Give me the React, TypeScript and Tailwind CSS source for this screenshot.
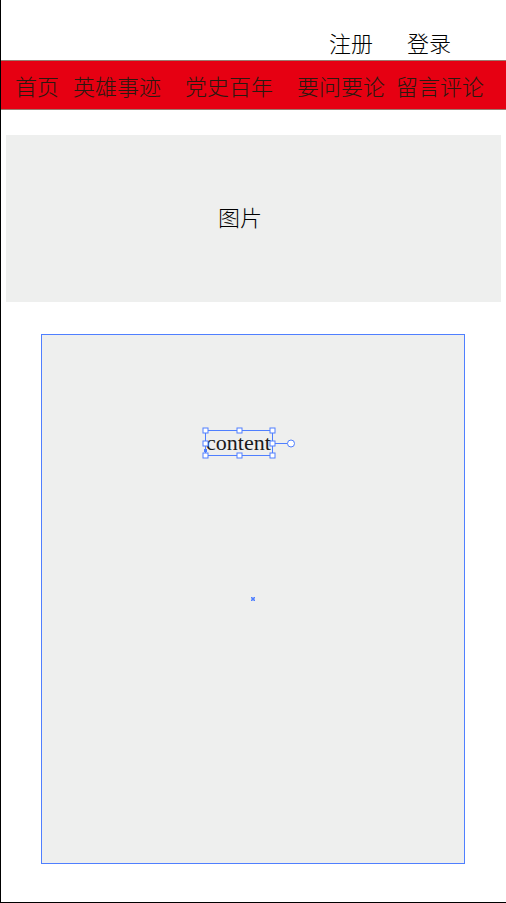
import React from "react";

const NAV = [
  { label: "首页", ml: "ml-[14px]" },
  { label: "英雄事迹", ml: "ml-[14px]" },
  { label: "党史百年", ml: "ml-[24px]" },
  { label: "要问要论", ml: "ml-[24px]" },
  { label: "留言评论", ml: "ml-[11px]" },
];

const cjk = "font-['Noto_Sans_CJK_SC','Noto_Sans',sans-serif]";

function Handle({ x, y }: { x: number; y: number }) {
  return <rect x={x - 2.5} y={y - 2.5} width={5} height={5} fill="#fff" stroke="#4f7fff" strokeWidth={1} />;
}

function SelectionOverlay() {
  // editor-style selection frame drawn over the "content" label
  return (
    <div className="absolute left-[160px] top-[92px] h-[32px] w-[96px]">
      <span className="absolute left-[4px] top-[1px] font-['Liberation_Serif',serif] text-[22px] leading-[30px] text-[#1a1a1a]">content</span>
      <svg width="96" height="32" viewBox="0 0 96 32" className="absolute left-0 top-0">
        <rect x={3.5} y={3.5} width={67} height={25} fill="none" stroke="#4f7fff" strokeWidth={1} />
        <line x1={71} y1={16.5} x2={85.5} y2={16.5} stroke="#4f7fff" strokeWidth={1} />
        <circle cx={89} cy={16.5} r={3.5} fill="#fff" stroke="#4f7fff" strokeWidth={1} />
        <rect x={2} y={22} width={3} height={3} fill="#4f7fff" />
        <Handle x={3.5} y={3.5} />
        <Handle x={37.5} y={3.5} />
        <Handle x={70.5} y={3.5} />
        <Handle x={3.5} y={16.5} />
        <Handle x={70.5} y={16.5} />
        <Handle x={3.5} y={28.5} />
        <Handle x={37.5} y={28.5} />
        <Handle x={70.5} y={28.5} />
      </svg>
    </div>
  );
}

export default function App() {
  return (
    <div className="h-[903px] w-[507px] overflow-hidden border-b border-l border-black bg-white">
      <div className="flex h-[60px] items-end justify-end pb-[5px] pr-[56px]">
        <span className={`${cjk} text-[22px] leading-[26px] font-light text-black`}>注册</span>
        <span className={`${cjk} ml-[34px] text-[22px] leading-[26px] font-light text-black`}>登录</span>
      </div>

      <nav className="flex h-[50px] items-center border-y border-[#9a7b6f] bg-[#e60012]">
        {NAV.map((item) => (
          <span key={item.label} className={`${cjk} ${item.ml} text-[22px] leading-[26px] font-light text-[#2a1a10]`}>
            {item.label}
          </span>
        ))}
      </nav>

      <div className="ml-[5px] mt-[25px] flex h-[167px] w-[495px] items-center bg-[#eeefee] pb-[6px] pl-[212px]">
        <span className={`${cjk} text-[22px] leading-[26px] font-light text-black`}>图片</span>
      </div>

      <div className="relative ml-[40px] mt-[32px] h-[530px] w-[424px] border border-[#4f7fff] bg-[#eeefee]">
        <SelectionOverlay />
        <svg width="6" height="6" viewBox="0 0 6 6" className="absolute left-[208px] top-[261px]">
          <rect x={1} y={1} width={4} height={4} fill="#4f7fff" opacity={0.6} />
          <line x1={1} y1={1} x2={5} y2={5} stroke="#4f7fff" strokeWidth={1} />
          <line x1={5} y1={1} x2={1} y2={5} stroke="#4f7fff" strokeWidth={1} />
        </svg>
      </div>
    </div>
  );
}
